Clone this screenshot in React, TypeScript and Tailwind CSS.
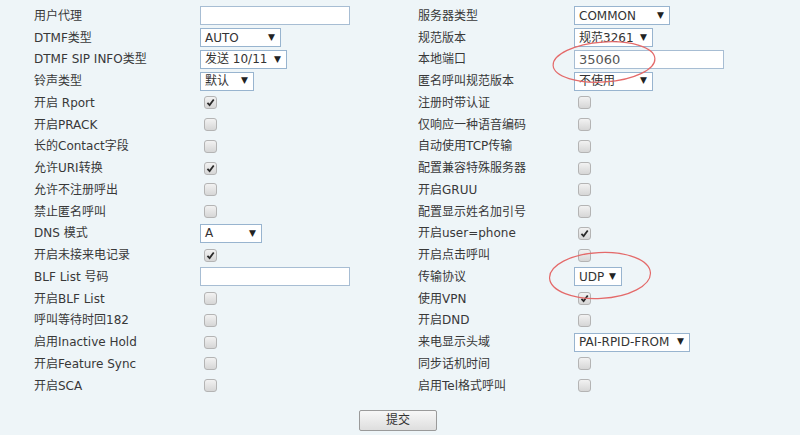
import React from 'react';

type Control =
  | { kind: 'input'; value?: string; width: number }
  | { kind: 'select'; value: string; width: number }
  | { kind: 'check'; checked: boolean };

interface Row {
  label: string;
  control: Control;
}

const leftRows: Row[] = [
  { label: '用户代理', control: { kind: 'input', width: 150 } },
  { label: 'DTMF类型', control: { kind: 'select', value: 'AUTO', width: 81 } },
  { label: 'DTMF SIP INFO类型', control: { kind: 'select', value: '发送 10/11', width: 87 } },
  { label: '铃声类型', control: { kind: 'select', value: '默认', width: 54 } },
  { label: '开启 Rport', control: { kind: 'check', checked: true } },
  { label: '开启PRACK', control: { kind: 'check', checked: false } },
  { label: '长的Contact字段', control: { kind: 'check', checked: false } },
  { label: '允许URI转换', control: { kind: 'check', checked: true } },
  { label: '允许不注册呼出', control: { kind: 'check', checked: false } },
  { label: '禁止匿名呼叫', control: { kind: 'check', checked: false } },
  { label: 'DNS 模式', control: { kind: 'select', value: 'A', width: 62 } },
  { label: '开启未接来电记录', control: { kind: 'check', checked: true } },
  { label: 'BLF List 号码', control: { kind: 'input', width: 150 } },
  { label: '开启BLF List', control: { kind: 'check', checked: false } },
  { label: '呼叫等待时回182', control: { kind: 'check', checked: false } },
  { label: '启用Inactive Hold', control: { kind: 'check', checked: false } },
  { label: '开启Feature Sync', control: { kind: 'check', checked: false } },
  { label: '开启SCA', control: { kind: 'check', checked: false } },
];

const rightRows: Row[] = [
  { label: '服务器类型', control: { kind: 'select', value: 'COMMON', width: 96 } },
  { label: '规范版本', control: { kind: 'select', value: '规范3261', width: 79 } },
  { label: '本地端口', control: { kind: 'input', value: '35060', width: 150 } },
  { label: '匿名呼叫规范版本', control: { kind: 'select', value: '不使用', width: 79 } },
  { label: '注册时带认证', control: { kind: 'check', checked: false } },
  { label: '仅响应一种语音编码', control: { kind: 'check', checked: false } },
  { label: '自动使用TCP传输', control: { kind: 'check', checked: false } },
  { label: '配置兼容特殊服务器', control: { kind: 'check', checked: false } },
  { label: '开启GRUU', control: { kind: 'check', checked: false } },
  { label: '配置显示姓名加引号', control: { kind: 'check', checked: false } },
  { label: '开启user=phone', control: { kind: 'check', checked: true } },
  { label: '开启点击呼叫', control: { kind: 'check', checked: false } },
  { label: '传输协议', control: { kind: 'select', value: 'UDP', width: 48 } },
  { label: '使用VPN', control: { kind: 'check', checked: true } },
  { label: '开启DND', control: { kind: 'check', checked: false } },
  { label: '来电显示头域', control: { kind: 'select', value: 'PAI-RPID-FROM', width: 116 } },
  { label: '同步话机时间', control: { kind: 'check', checked: false } },
  { label: '启用Tel格式呼叫', control: { kind: 'check', checked: false } },
];

const FieldControl = ({ control }: { control: Control }) => {
  if (control.kind === 'input') {
    return (
      <div
        className="h-[19px] border border-[#a7bdd3] bg-white pl-[4px] text-[13px] leading-[17px] text-[#555]"
        style={{ width: control.width }}
      >
        {control.value}
      </div>
    );
  }
  if (control.kind === 'select') {
    return (
      <div
        className="flex h-[19px] items-center justify-between gap-[4px] border border-[#98b4cf] bg-white pl-[4px] pr-[5px] text-[12px] text-[#333]"
        style={{ width: control.width }}
      >
        <span className="whitespace-nowrap">{control.value}</span>
        <span className="text-[9px] text-[#222]">▼</span>
      </div>
    );
  }
  return (
    <div className="ml-[4px] flex h-[13px] w-[13px] items-center justify-center rounded-[3px] border border-[#b4b4b4] bg-gradient-to-b from-[#f2f2f2] to-[#d6d6d6]">
      {control.checked && (
        <svg width="9" height="9" viewBox="0 0 10 10">
          <path d="M1.6 5.4 L4 7.8 L8.6 1.6" fill="none" stroke="#2a2a2a" strokeWidth="2" />
        </svg>
      )}
    </div>
  );
};

export default function App() {
  return (
    <div
      className="relative h-[435px] w-[800px] overflow-hidden bg-[#eef5f8] text-[12px] text-[#383838]"
      style={{ fontFamily: '"DejaVu Sans", "Noto Sans CJK SC", sans-serif' }}
    >
      <div className="grid grid-cols-[166px_218px_156px_1fr] pl-[34px] pt-[5px]">
        {leftRows.map((row, i) => (
          <React.Fragment key={i}>
            <div className="flex h-[21.75px] items-center whitespace-nowrap">{row.label}</div>
            <div className="flex h-[21.75px] items-center">
              <FieldControl control={row.control} />
            </div>
            <div className="flex h-[21.75px] items-center whitespace-nowrap">{rightRows[i].label}</div>
            <div className="flex h-[21.75px] items-center">
              <FieldControl control={rightRows[i].control} />
            </div>
          </React.Fragment>
        ))}
      </div>

      <div className="mt-[13px] flex justify-center pr-[4px]">
        <button className="h-[21px] w-[78px] rounded-[2px] border border-[#9a9a9a] bg-gradient-to-b from-[#f7f7f7] to-[#dedede] text-[12px] text-[#333]">
          提交
        </button>
      </div>

      {/* red annotation circles */}
      <svg className="pointer-events-none absolute left-0 top-0" width="800" height="435">
        <ellipse cx="604" cy="62" rx="51" ry="20" fill="none" stroke="#e46a6a" strokeWidth="1.2" transform="rotate(-4 604 62)" />
        <ellipse cx="600" cy="275.5" rx="50.5" ry="23" fill="none" stroke="#e46a6a" strokeWidth="1.2" transform="rotate(-3 600 275.5)" />
      </svg>
    </div>
  );
}
